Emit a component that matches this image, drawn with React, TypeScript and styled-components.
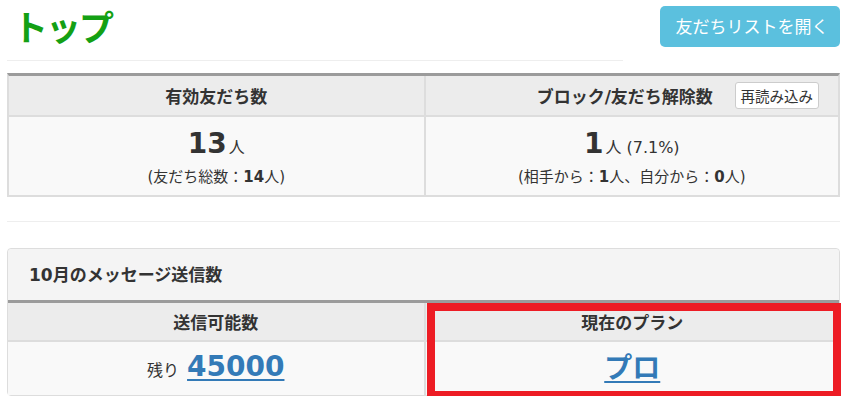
import styled, { createGlobalStyle } from "styled-components";

const GlobalStyle = createGlobalStyle`
  html, body {
    margin: 0;
    padding: 0;
    background: #ffffff;
  }
  body {
    font-family: "DejaVu Sans", "Noto Sans CJK JP", sans-serif;
    color: #333333;
    font-size: 14px;
  }
`;

const Page = styled.div`
  width: 833px;
  padding: 0 8px 0 7px;
`;

const TopRow = styled.div`
  display: flex;
  justify-content: space-between;
  align-items: flex-start;
`;

const TitleCol = styled.div`
  width: 616px;
`;

const Title = styled.h1`
  margin: 0;
  padding: 0 0 0 6px;
  font-family: "Noto Sans CJK JP", sans-serif;
  font-size: 35px;
  line-height: 51px;
  height: 46px;
  font-weight: 700;
  letter-spacing: -2px;
  color: #14a014;
`;

const Rule = styled.hr<{ $top: number }>`
  margin: ${(p) => p.$top}px 0 0;
  border: none;
  border-top: 1px solid #eeeeee;
  height: 0;
`;

const OpenBtn = styled.button`
  margin-top: 6px;
  width: 180px;
  height: 41px;
  border: none;
  border-radius: 5px;
  background: #5bc0de;
  color: #ffffff;
  font-family: "Noto Sans CJK JP", sans-serif;
  font-size: 17px;
  padding: 0 0 2px 4px;
  cursor: pointer;
`;

const Table = styled.div<{ $top: number }>`
  margin-top: ${(p) => p.$top}px;
  display: grid;
  grid-template-columns: 1fr 1fr;
  border-top: 3px solid #9b9b9b;
  border-left: 2px solid #dddddd;
  border-right: 2px solid #dddddd;
  border-bottom: 2px solid #dddddd;
`;

const HeadCell = styled.div<{ $h: number; $last?: boolean }>`
  height: ${(p) => p.$h}px;
  background: #ececec;
  border-bottom: 2px solid #dddddd;
  border-left: ${(p) => (p.$last ? "2px solid #dddddd" : "none")};
  display: flex;
  align-items: center;
  justify-content: center;
  font-weight: bold;
  font-size: 17px;
  color: #333333;
`;

const HeadGrid = styled(HeadCell)`
  display: grid;
  grid-template-columns: 1fr auto 1fr;
  align-items: center;
`;

const HeadText = styled.span`
  grid-column: 2;
  padding-right: 14px;
`;

const ReloadBtn = styled.button`
  grid-column: 3;
  justify-self: end;
  margin-right: 19px;
  height: 27px;
  padding: 0 5px;
  background: #ffffff;
  border: 1px solid #cccccc;
  border-radius: 3px;
  font-family: "Noto Sans CJK JP", sans-serif;
  font-size: 14.5px;
  font-weight: normal;
  color: #333333;
  cursor: pointer;
`;

const BodyCell = styled.div<{ $h: number; $last?: boolean }>`
  height: ${(p) => p.$h}px;
  background: #f9f9f9;
  border-left: ${(p) => (p.$last ? "2px solid #dddddd" : "none")};
  display: flex;
  flex-direction: column;
  align-items: center;
  justify-content: center;
  position: relative;
`;

const BigLine = styled.div`
  display: flex;
  align-items: baseline;
  gap: 2px;
  line-height: 36px;
`;

const BigNum = styled.span`
  font-size: 28px;
  font-weight: bold;
  color: #333333;
`;

const Unit = styled.span<{ $gap?: number }>`
  font-size: 16px;
  color: #333333;
  margin-right: ${(p) => p.$gap ?? 0}px;
`;

const SubLine = styled.div`
  font-size: 15px;
  line-height: 20px;
  color: #333333;
  margin-top: 1px;

  b {
    font-weight: bold;
  }
`;

const Panel = styled.div`
  margin-top: 26px;
  border: 1px solid #dddddd;
  border-radius: 4px;
  background: #f9f9f9;
`;

const PanelHeading = styled.div`
  height: 51px;
  background: #f4f4f4;
  border-radius: 4px 4px 0 0;
  display: flex;
  align-items: center;
  padding-left: 21px;
  padding-bottom: 3px;
  box-sizing: border-box;
  font-weight: bold;
  font-size: 17px;
  color: #333333;
`;

const InnerTable = styled.div`
  display: grid;
  grid-template-columns: 1fr 1fr;
  border-top: 3px solid #9b9b9b;
`;

const LinkNum = styled.a`
  font-size: 28px;
  font-weight: bold;
  color: #337ab7;
  text-decoration: underline;
  text-underline-offset: 3px;
  cursor: pointer;
`;

const Highlight = styled.div`
  position: absolute;
  left: 1px;
  right: -2px;
  top: -39px;
  bottom: -4px;
  border: 8px solid #ed1c24;
  pointer-events: none;
`;

export default function App() {
  return (
    <>
      <GlobalStyle />
      <Page>
        <TopRow>
          <TitleCol>
            <Title>トップ</Title>
            <Rule $top={14} />
          </TitleCol>
          <OpenBtn>友だちリストを開く</OpenBtn>
        </TopRow>

        <Table $top={12}>
          <HeadCell $h={39}>有効友だち数</HeadCell>
          <HeadGrid $h={39} $last>
            <HeadText>ブロック/友だち解除数</HeadText>
            <ReloadBtn>再読み込み</ReloadBtn>
          </HeadGrid>
          <BodyCell $h={78}>
            <BigLine>
              <BigNum>13</BigNum>
              <Unit>人</Unit>
            </BigLine>
            <SubLine>
              (友だち総数：<b>14</b>人)
            </SubLine>
          </BodyCell>
          <BodyCell $h={78} $last>
            <BigLine>
              <BigNum>1</BigNum>
              <Unit>人 (7.1%)</Unit>
            </BigLine>
            <SubLine>
              (相手から：<b>1</b>人、自分から：<b>0</b>人)
            </SubLine>
          </BodyCell>
        </Table>

        <Rule $top={24} />

        <Panel>
          <PanelHeading>10月のメッセージ送信数</PanelHeading>
          <InnerTable>
            <HeadCell $h={37}>送信可能数</HeadCell>
            <HeadCell $h={37} $last>
              現在のプラン
            </HeadCell>
            <BodyCell $h={53}>
              <BigLine>
                <Unit $gap={6}>残り</Unit>
                <LinkNum>45000</LinkNum>
              </BigLine>
            </BodyCell>
            <BodyCell $h={53} $last>
              <BigLine>
                <LinkNum>プロ</LinkNum>
              </BigLine>
              <Highlight />
            </BodyCell>
          </InnerTable>
        </Panel>
      </Page>
    </>
  );
}
